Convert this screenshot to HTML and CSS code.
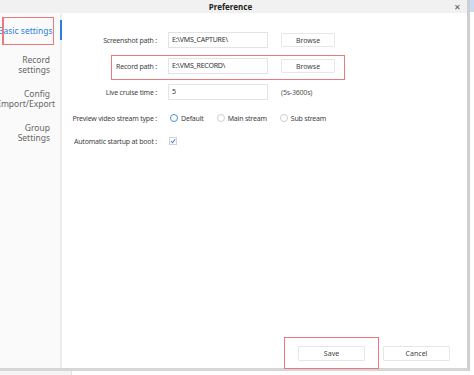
FILE: index.html
```html
<!DOCTYPE html>
<html lang="en">
<head>
    <meta charset="UTF-8">
    <meta name="viewport" content="width=device-width, initial-scale=1.0">
    <title>Preference</title>
    <link rel="stylesheet" href="styles.css">
</head>
<body>

<div class="desktop">
    <div class="back-window"></div>

    <div class="dialog">
        <div class="title-bar">
            <span class="title">Preference</span>
            <span class="close">&#x2715;</span>
        </div>

        <div class="dialog-body">
            <div class="sidebar">
                <div class="nav-item active">Basic settings</div>
                <div class="nav-item">Record<br>settings</div>
                <div class="nav-item">Config<br>Import/Export</div>
                <div class="nav-item">Group<br>Settings</div>
            </div>

            <div class="content">
                <div class="form">
                    <div class="form-row">
                        <label>Screenshot path :</label>
                        <div class="text-input">E:\VMS_CAPTURE\</div>
                        <button class="btn">Browse</button>
                    </div>
                    <div class="form-row">
                        <label>Record path :</label>
                        <div class="text-input">E:\VMS_RECORD\</div>
                        <button class="btn">Browse</button>
                    </div>
                    <div class="form-row">
                        <label>Live cruise time :</label>
                        <div class="text-input">5</div>
                        <span class="hint">(5s-3600s)</span>
                    </div>
                    <div class="form-row short">
                        <label>Preview video stream type :</label>
                        <div class="radios">
                            <span class="radio-item"><span class="radio hover"></span>Default</span>
                            <span class="radio-item"><span class="radio"></span>Main stream</span>
                            <span class="radio-item"><span class="radio"></span>Sub stream</span>
                        </div>
                    </div>
                    <div class="form-row short">
                        <label>Automatic startup at boot :</label>
                        <span class="checkbox">
                            <svg width="7" height="6" viewBox="0 0 7 6"><path d="M1 3 L3 5 L6 1" fill="none" stroke="#3c7fd6" stroke-width="1.2"/></svg>
                        </span>
                    </div>
                </div>

                <div class="footer">
                    <button class="btn wide">Save</button>
                    <button class="btn wide">Cancel</button>
                </div>

                <!-- red annotation boxes -->
                <div class="mark mark-record"></div>
                <div class="mark mark-save"></div>
            </div>

            <div class="mark mark-basic"></div>
        </div>
    </div>

    <div class="taskbar"></div>
</div>

</body>
</html>
```

FILE: styles.css
```css
* {
    margin: 0;
    padding: 0;
    box-sizing: border-box;
}

body {
    font-family: 'Noto Sans', 'Open Sans', sans-serif;
    background: #fff;
    width: 474px;
    height: 375px;
    overflow: hidden;
}

.desktop {
    position: relative;
    width: 474px;
    height: 375px;
}

.back-window {
    position: absolute;
    top: 0;
    right: 0;
    width: 4px;
    height: 12px;
    background: #c9dcf2;
}

.dialog {
    width: 470px;
    height: 371px;
    display: flex;
    flex-direction: column;
    background: #fff;
    border-right: 3px solid #cfcfcf;
    border-bottom: 3px solid #d6d6d6;
}

.title-bar {
    height: 13px;
    background: #f1f1f1;
    position: relative;
    display: flex;
    align-items: center;
    justify-content: center;
}

.title {
    font-size: 8px;
    font-weight: 700;
    color: #222;
    margin-right: 6px;
}

.close {
    position: absolute;
    right: 6px;
    top: 0;
    font-size: 8px;
    line-height: 13px;
    color: #555;
}

.dialog-body {
    flex: 1;
    display: flex;
    position: relative;
}

.sidebar {
    width: 62px;
    background: #fafafa;
    border-right: 2px solid #ececec;
    padding-top: 8px;
    display: flex;
    flex-direction: column;
    align-items: flex-end;
}

.nav-item {
    font-size: 8.5px;
    line-height: 10px;
    color: #666;
    text-align: right;
    padding-right: 10px;
    margin-bottom: 14px;
    white-space: nowrap;
    width: 62px;
    position: relative;
}

.nav-item.active {
    color: #2b7fdc;
    height: 20px;
    line-height: 20px;
    margin-bottom: 14px;
}

.nav-item.active::after {
    content: "";
    position: absolute;
    right: -2px;
    top: -1px;
    width: 2px;
    height: 20px;
    background: #2b7fdc;
}

.content {
    flex: 1;
    display: flex;
    flex-direction: column;
    justify-content: space-between;
    padding-top: 19px;
    position: relative;
}

.form {
    display: flex;
    flex-direction: column;
}

.form-row {
    display: grid;
    grid-template-columns: 95px 100px 56px;
    column-gap: 11px;
    align-items: center;
    height: 16px;
    margin-bottom: 10px;
    font-size: 7px;
    letter-spacing: -0.2px;
    color: #444;
}

.form-row.short {
    margin-bottom: 7px;
}

.form-row label {
    text-align: right;
    white-space: nowrap;
}

.text-input {
    height: 16px;
    border: 1px solid #e3e3e3;
    line-height: 14px;
    padding-left: 3px;
    color: #333;
}

.hint {
    margin-left: 2px;
    color: #555;
    white-space: nowrap;
}

.btn {
    height: 14px;
    background: #fff;
    border: 1px solid #e6e6e6;
    border-radius: 1px;
    font-family: inherit;
    font-size: 7px;
    color: #444;
    margin-left: 2px;
}

.radios {
    display: flex;
    gap: 11px;
    white-space: nowrap;
    grid-column: 2 / span 2;
}

.radio-item {
    display: flex;
    align-items: center;
    gap: 3px;
}

.radio {
    width: 8px;
    height: 8px;
    border-radius: 50%;
    border: 1px solid #cfcfcf;
    margin-left: 2px;
}

.radio.hover {
    border-color: #4a8fe0;
}

.checkbox {
    width: 8px;
    height: 8px;
    border: 1px solid #d3d3d3;
    margin-left: 1px;
    display: flex;
    align-items: center;
    justify-content: center;
}

.footer {
    display: flex;
    justify-content: flex-end;
    gap: 18px;
    padding: 0 17px 7px 0;
}

.btn.wide {
    width: 67px;
    height: 15px;
    margin-left: 0;
    letter-spacing: 0;
}

.mark {
    position: absolute;
    border: 1px solid #e8797f;
}

.mark-basic {
    left: 2px;
    top: 4px;
    width: 52px;
    height: 28px;
    border-left-width: 2px;
}

.mark-record {
    left: 49px;
    top: 42px;
    width: 234px;
    height: 25px;
}

.mark-save {
    left: 222px;
    top: 324px;
    width: 95px;
    height: 32px;
}

.taskbar {
    width: 72px;
    height: 4px;
    background: #f4f4f4;
    border-right: 1px solid #e2e2e2;
}
```
